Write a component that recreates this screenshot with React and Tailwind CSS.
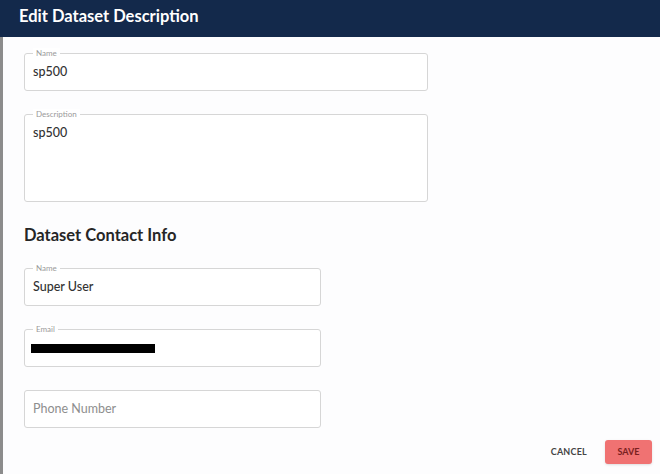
import React from "react";

const Field = ({ label, value, className, tall, placeholder, redacted }) => {
  return (
    <div
      className={`relative border border-[#d6d6d6] rounded-[3px] bg-white ${className}`}
    >
      {label && (
        <span className="absolute -top-[6px] left-[8px] px-[3px] bg-white text-[8px] leading-[10px] text-[#9a9a9a]">
          {label}
        </span>
      )}
      <div
        className={`px-[8px] ${tall ? "pt-[9px]" : "h-full flex items-center"} text-[12.5px]`}
      >
        {redacted ? (
          <div className="w-[124px] h-[9px] bg-black -ml-[2px] mt-[1px]" />
        ) : placeholder ? (
          <span className="text-[#8e8e8e]">{placeholder}</span>
        ) : (
          <span className="text-[#333] font-medium">{value}</span>
        )}
      </div>
    </div>
  );
};

const App = () => {
  return (
    <div
      className="w-[660px] h-[474px] flex flex-col bg-[#fdfdfe] overflow-hidden"
      style={{ fontFamily: "Lato, 'Open Sans', sans-serif" }}
    >
      {/* header */}
      <div className="h-[37px] bg-[#13294b] flex items-center pl-[19px] shrink-0">
        <span className="text-white font-bold text-[16.5px] -mt-[4px]">
          Edit Dataset Description
        </span>
      </div>

      {/* body */}
      <div className="flex-1 border-l-[3px] border-[#8c8c8c] pl-[21px] pt-[16px] relative">
        <Field label="Name" value="sp500" className="w-[404px] h-[38px]" />
        <Field
          label="Description"
          value="sp500"
          tall
          className="w-[404px] h-[88px] mt-[23px]"
        />

        <h2 className="mt-[23px] text-[16.5px] font-bold text-[#262626] leading-[20px]">
          Dataset Contact Info
        </h2>

        <Field label="Name" value="Super User" className="w-[297px] h-[38px] mt-[23px]" />
        <Field label="Email" redacted className="w-[297px] h-[38px] mt-[23px]" />
        <Field placeholder="Phone Number" className="w-[297px] h-[38px] mt-[23px]" />

        <div className="flex justify-end items-center gap-[18px] pr-[8px] mt-[12px]">
          <span className="text-[9px] font-bold text-[#444] tracking-wide">
            CANCEL
          </span>
          <button className="w-[47px] h-[24px] rounded-[3px] bg-[#f07272] text-[9px] font-bold text-[#7a1f1f] shadow-sm">
            SAVE
          </button>
        </div>
      </div>
    </div>
  );
};

export default App;
